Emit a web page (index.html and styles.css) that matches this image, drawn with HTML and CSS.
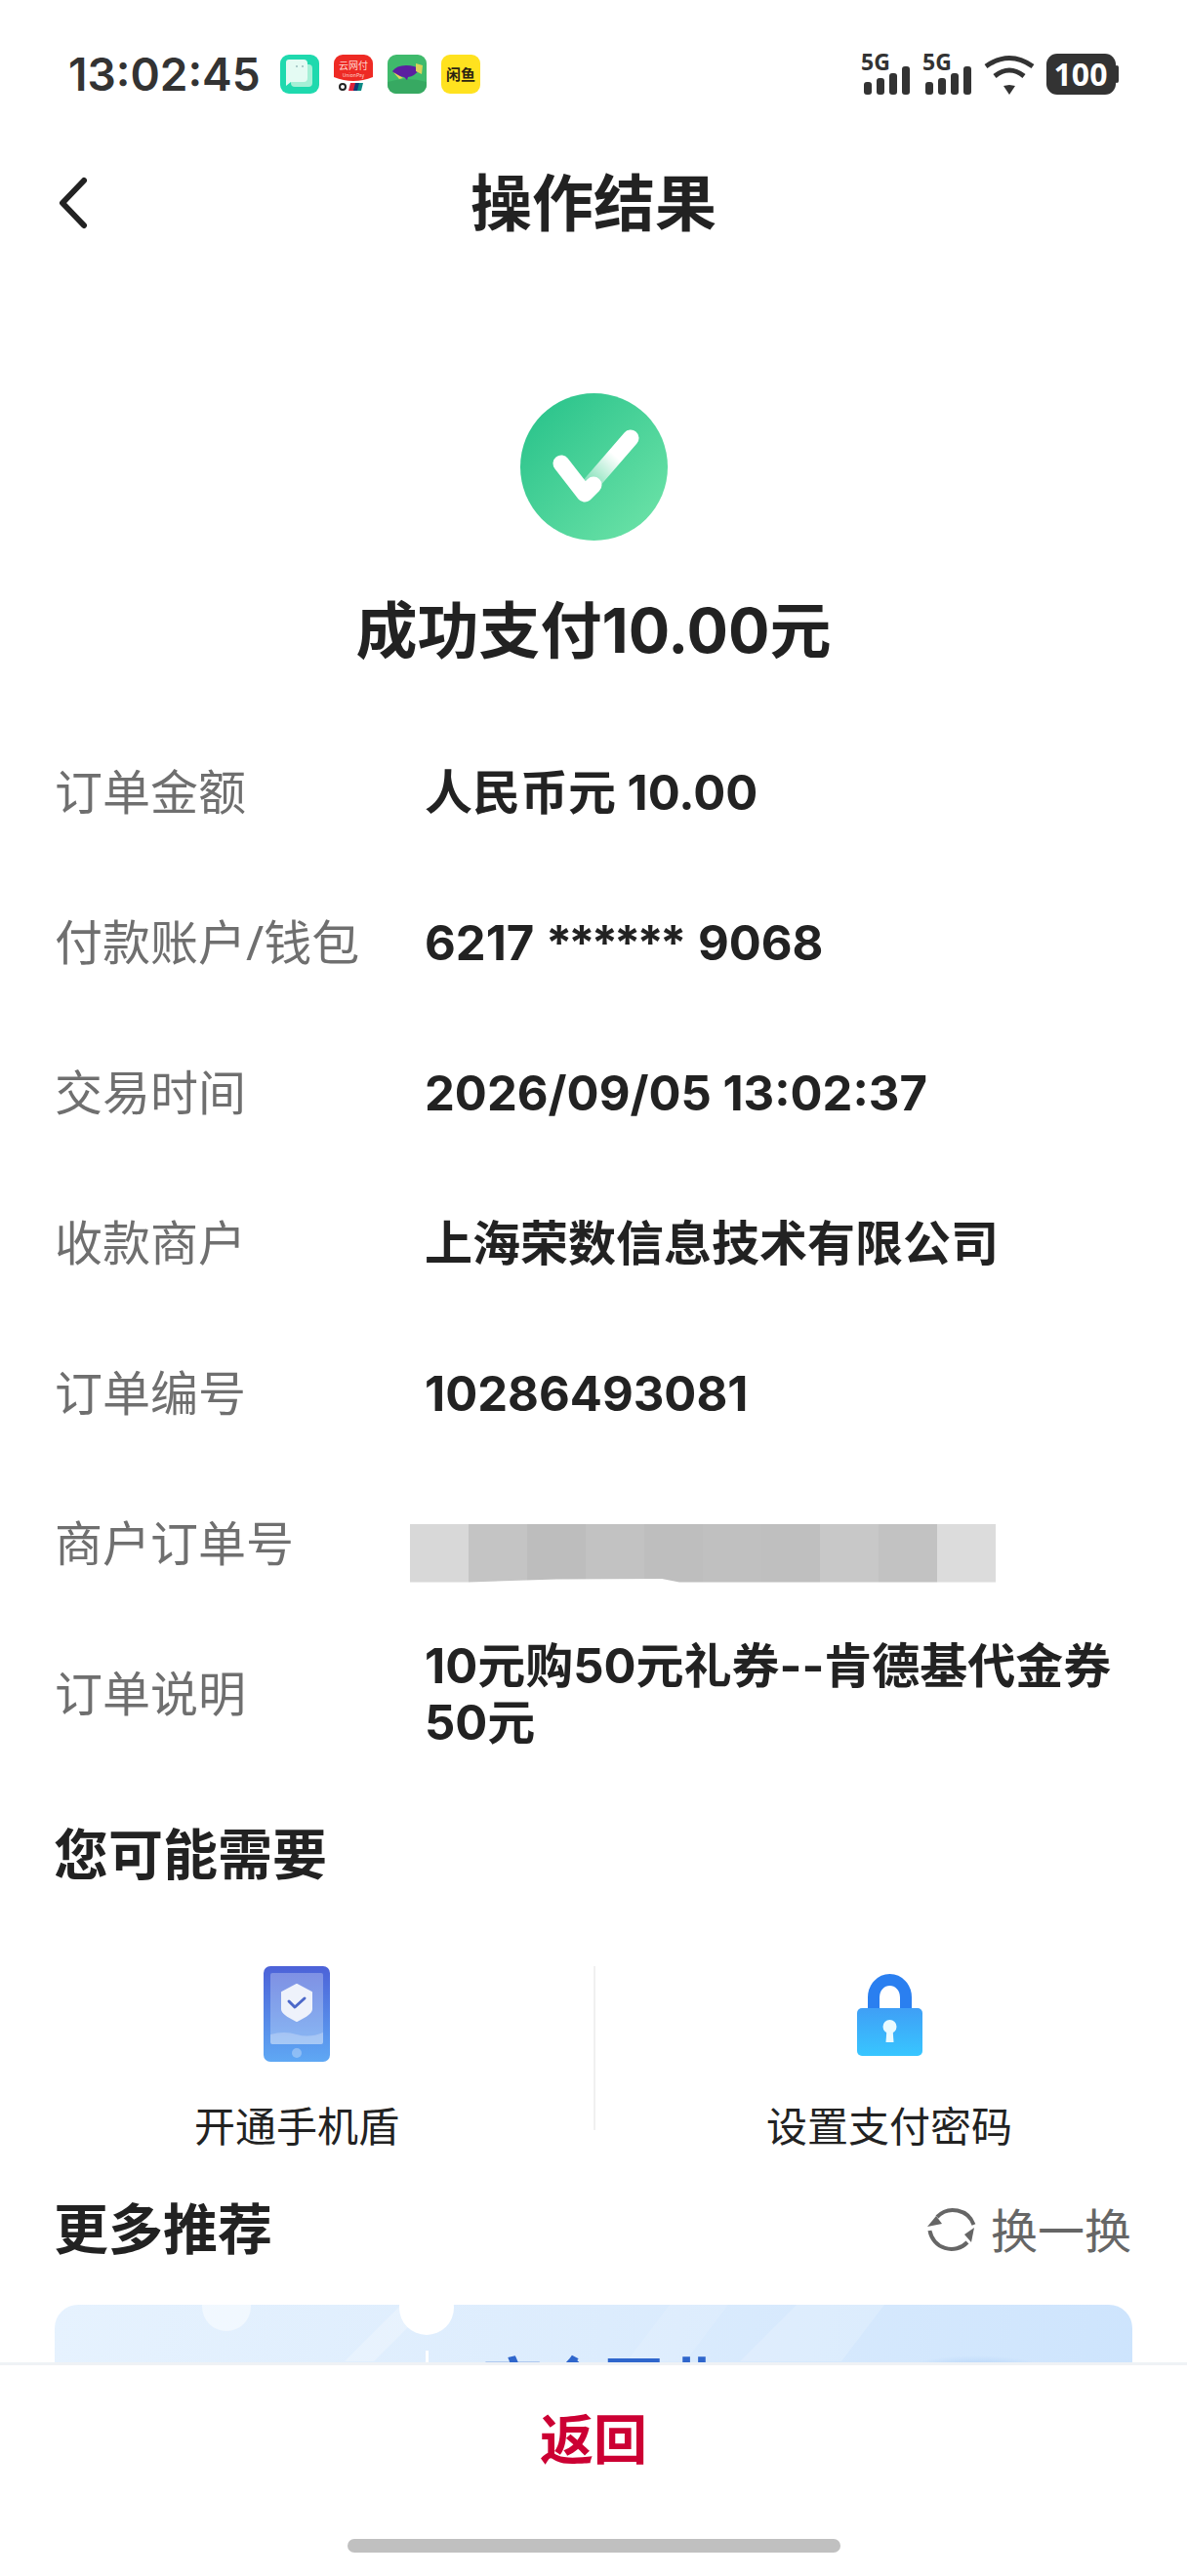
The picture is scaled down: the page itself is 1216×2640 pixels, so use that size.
FILE: index.html
```html
<!DOCTYPE html>
<html>
  <head>
    <meta name="viewport" content="width=device-width,initial-scale=1.0" />
    <title>操作结果</title>
    <link rel="stylesheet" href="styles.css">
  </head>
  <body>
    <div id="page">
      <div id="main">
        <div class="status">
          <div class="status-left">
            <span class="time">13:02:45</span>
            <svg class="app" viewBox="0 0 40 40">
              <rect width="40" height="40" rx="9" fill="#1fd9ae"/>
              <rect x="11" y="10" width="22" height="23" rx="4" fill="#a5f0d6"/>
              <path d="M9 5h15a4 4 0 0 1 4 4v15a4 4 0 0 1-4 4H11l-5 4V8a3 3 0 0 1 3-3z" fill="#e4fbf3"/>
              <circle cx="17" cy="12" r="1" fill="#9bb"/>
              <circle cx="23" cy="12" r="1" fill="#9bb"/>
            </svg>
            <svg class="app" viewBox="0 0 40 40">
              <rect width="40" height="40" rx="9" fill="#fff"/>
              <path d="M0 9a9 9 0 0 1 9-9h22a9 9 0 0 1 9 9v14q-20 8-40 0z" fill="#ee2a24"/>
              <text x="20" y="15" class="app-text" font-size="10" fill="#ffd9cf">云网付</text>
              <text x="20" y="23" class="app-text" font-size="5" fill="#ffd9cf">UnionPay</text>
              <circle cx="9" cy="33" r="3" fill="none" stroke="#222" stroke-width="2"/>
              <path d="M17 29h6l-2 8h-6z" fill="#e0213a"/>
              <path d="M22 29h5l-2 8h-5z" fill="#123a78"/>
              <path d="M26 29h4l-2 8h-4z" fill="#0d8a85"/>
            </svg>
            <svg class="app" viewBox="0 0 40 40">
              <rect width="40" height="40" rx="9" fill="#3fba6c"/>
              <path d="M0 28q20-6 40 0v3a9 9 0 0 1-9 9H9a9 9 0 0 1-9-9z" fill="#37a962"/>
              <path d="M5 17q4-6 14-6 9 0 14 4-5 7-12 8l-1 3-3-3q-8-1-12-6z" fill="#5b1fa0"/>
              <path d="M29 9l7 2-1 9-6-3z" fill="#d9d25a"/>
              <path d="M6 18l10 6-4 1z" fill="#e6d35a"/>
            </svg>
            <svg class="app" viewBox="0 0 40 40">
              <rect width="40" height="40" rx="9" fill="#ffe21f"/>
              <text x="20" y="26" class="app-text bold" font-size="15" fill="#2b2412">闲鱼</text>
            </svg>
          </div>
          <div class="status-right">
            <svg class="signal" viewBox="0 0 51 42">
              <text x="0" y="17" class="net">5G</text>
              <rect x="3" y="29" width="8" height="13" rx="3"/>
              <rect x="16" y="25" width="8" height="17" rx="3"/>
              <rect x="29" y="20" width="8" height="22" rx="3"/>
              <rect x="42" y="13" width="8" height="29" rx="3"/>
            </svg>
            <svg class="signal" viewBox="0 0 51 42">
              <text x="0" y="17" class="net">5G</text>
              <rect x="3" y="29" width="8" height="13" rx="3"/>
              <rect x="16" y="25" width="8" height="17" rx="3"/>
              <rect x="29" y="20" width="8" height="22" rx="3"/>
              <rect x="42" y="13" width="8" height="29" rx="3"/>
            </svg>
            <svg class="wifi" viewBox="0 0 52 42">
              <path d="M2 13Q26-4 50 13" fill="none" stroke="#333" stroke-width="5"/>
              <path d="M11 23Q26 11 41 23" fill="none" stroke="#333" stroke-width="5"/>
              <path d="M20 33l6-1 6 1-6 9z" fill="#333"/>
            </svg>
            <svg class="battery" viewBox="0 0 74 42">
              <rect width="71" height="42" rx="11" fill="#333"/>
              <rect x="70" y="12" width="4" height="18" rx="2" fill="#333"/>
              <text x="35" y="33" class="batt-text">100</text>
            </svg>
          </div>
        </div>

        <div class="nav">
          <svg class="back" viewBox="0 0 30 54">
            <path d="M26 4L4 27l22 23" fill="none" stroke="#222" stroke-width="6" stroke-linecap="round" stroke-linejoin="round"/>
          </svg>
          <div class="nav-title">操作结果</div>
        </div>

        <div class="result">
          <svg class="result-icon" viewBox="0 0 151 151">
            <defs>
              <linearGradient id="okBg" x1="0" y1="0" x2="1" y2="1">
                <stop offset="0.1" stop-color="#2cc48c"/>
                <stop offset="0.9" stop-color="#69e1a6"/>
              </linearGradient>
              <linearGradient id="okArm" gradientUnits="userSpaceOnUse" x1="113" y1="46" x2="68" y2="98">
                <stop offset="0.35" stop-color="#fff"/>
                <stop offset="1" stop-color="#fff" stop-opacity="0.2"/>
              </linearGradient>
            </defs>
            <circle cx="75.5" cy="75.5" r="75.5" fill="url(#okBg)"/>
            <path d="M113 46L68 98" fill="none" stroke="url(#okArm)" stroke-width="17" stroke-linecap="round"/>
            <path d="M42 72L66 103 75 94" fill="none" stroke="#fff" stroke-width="17" stroke-linecap="round" stroke-linejoin="round"/>
          </svg>
          <div class="result-text">成功支付10.00元</div>
        </div>

        <div class="rows">
          <div class="row"><div class="label">订单金额</div><div class="value">人民币元 10.00</div></div>
          <div class="row"><div class="label">付款账户/钱包</div><div class="value">6217 <span class="mask">******</span> 9068</div></div>
          <div class="row"><div class="label">交易时间</div><div class="value">2026/09/05 13:02:37</div></div>
          <div class="row"><div class="label">收款商户</div><div class="value">上海荣数信息技术有限公司</div></div>
          <div class="row"><div class="label">订单编号</div><div class="value">10286493081</div></div>
          <div class="row">
            <div class="label">商户订单号</div>
            <div class="blur"><i></i><i></i><i></i><i></i><i></i><i></i><i></i><i></i><i></i><i></i></div>
          </div>
          <div class="row"><div class="label">订单说明</div><div class="value desc">10元购50元礼券--肯德基代金券50元</div></div>
        </div>

        <div class="section-title first">您可能需要</div>
        <div class="actions">
          <div class="action">
            <svg class="phone" viewBox="0 0 68 98">
              <defs>
                <linearGradient id="phoneBg" x1="0" y1="0" x2="0" y2="1">
                  <stop offset="0" stop-color="#4c62d8"/>
                  <stop offset="1" stop-color="#5fa8f4"/>
                </linearGradient>
              </defs>
              <rect width="68" height="98" rx="7" fill="url(#phoneBg)"/>
              <rect x="7" y="7" width="54" height="73" rx="2" fill="#fff" fill-opacity="0.28"/>
              <path d="M7 70q14-4 27 0t27-2v10a2 2 0 0 1-2 2H9a2 2 0 0 1-2-2z" fill="#fff" fill-opacity="0.25"/>
              <path d="M34 19l15 8v17q0 5-15 12-15-7-15-12V27z" fill="#eef2fb" stroke="#eef2fb" stroke-width="2" stroke-linejoin="round"/>
              <path d="M26 36l6 6 10-9" fill="none" stroke="#4c68c9" stroke-width="3" stroke-linecap="round" stroke-linejoin="round"/>
              <circle cx="34" cy="89" r="5" fill="#fff" fill-opacity="0.3"/>
            </svg>
            <div class="action-label">开通手机盾</div>
          </div>
          <div class="action split">
            <svg class="lock" viewBox="0 0 67 84">
              <defs>
                <linearGradient id="lockBg" x1="0" y1="0" x2="0" y2="1">
                  <stop offset="0" stop-color="#3f9ff6"/>
                  <stop offset="1" stop-color="#38c6ff"/>
                </linearGradient>
              </defs>
              <path d="M17 38V24A16.5 18 0 0 1 50 24V38" fill="none" stroke="#2a7ff0" stroke-width="12"/>
              <rect y="35" width="67" height="49" rx="5" fill="url(#lockBg)"/>
              <circle cx="33.5" cy="54" r="7" fill="#eafaff"/>
              <path d="M30.500 56h6l1 14h-8z" fill="#eafaff"/>
            </svg>
            <div class="action-label">设置支付密码</div>
          </div>
        </div>

        <div class="more-head">
          <div class="section-title">更多推荐</div>
          <div class="swap">
            <svg class="swap-icon" viewBox="0 0 50 50">
              <path d="M10 14A22.500 22.500 0 0 1 47.500 22" fill="none" stroke="#666" stroke-width="4"/>
              <path d="M2.500 28A22.500 22.500 0 0 0 41 40" fill="none" stroke="#666" stroke-width="4"/>
              <path d="M0 24L9 13l6 8z" fill="#666"/>
              <path d="M48 25L38 32l7 8z" fill="#666"/>
            </svg>
            <span>换一换</span>
          </div>
        </div>

        <div class="card">
          <svg class="card-art" viewBox="0 0 1104 160" preserveAspectRatio="none">
            <defs>
              <radialGradient id="glow">
                <stop offset="0" stop-color="#a9ccf6" stop-opacity="0.8"/>
                <stop offset="1" stop-color="#a9ccf6" stop-opacity="0"/>
              </radialGradient>
            </defs>
            <path d="M297 58L355 0h30l-58 58z" fill="#fff" fill-opacity="0.25"/>
            <path d="M586 58L630 0h60l-44 58z" fill="#fff" fill-opacity="0.12"/>
            <path d="M702 58L760 0h90l-44 58z" fill="#fff" fill-opacity="0.18"/>
            <ellipse cx="944" cy="66" rx="70" ry="14" fill="url(#glow)"/>
            <circle cx="176" cy="2" r="25" fill="#fff" fill-opacity="0.5"/>
            <circle cx="381" cy="3" r="28" fill="#fff"/>
            <rect x="380" y="47" width="3" height="20" fill="#fff"/>
          </svg>
          <div class="card-title">商企互业</div>
        </div>
      </div>

      <div class="footer">
        <div class="footer-btn">返回</div>
        <div class="home-bar"></div>
      </div>
    </div>
  </body>
</html>
```

FILE: styles.css
```css
* {
  box-sizing: border-box;
}
body {
  margin: 0;
  background: #fff;
  font-family: "Noto Sans", "Noto Sans CJK SC", sans-serif;
  color: #222;
}

#page {
  width: 1216px;
  height: 2640px;
  display: flex;
  flex-direction: column;
  overflow: hidden;
}
#main {
  flex: 1;
  min-height: 0;
  overflow: hidden;
}

.status {
  height: 152px;
  padding: 0 70px;
  display: flex;
  justify-content: space-between;
  align-items: center;
}
.status-left {
  display: flex;
  align-items: center;
}
.time {
  width: 217px;
  font-family: Inter, "Noto Sans", sans-serif;
  font-size: 46px;
  font-weight: 600;
  color: #333;
}
.app {
  width: 40px;
  height: 40px;
  margin-right: 15px;
}
.app-text {
  font-family: "Noto Sans CJK SC", sans-serif;
  text-anchor: middle;
}
.app-text.bold {
  font-weight: 700;
}
.status-right {
  display: flex;
  align-items: center;
  gap: 12px;
}
.signal {
  width: 51px;
  height: 42px;
  fill: #333;
  overflow: visible;
}
.net {
  font-size: 23px;
  font-weight: 700;
}
.wifi {
  width: 52px;
  height: 42px;
}
.battery {
  width: 74px;
  height: 42px;
  overflow: visible;
}
.batt-text {
  fill: #fff;
  font-size: 32px;
  font-weight: 700;
  text-anchor: middle;
}

.nav {
  height: 112px;
  padding-left: 60px;
  display: flex;
  align-items: center;
  position: relative;
}
.back {
  width: 30px;
  height: 54px;
}
.nav-title {
  position: absolute;
  left: 0;
  right: 0;
  margin-top: -3px;
  text-align: center;
  font-size: 63px;
  font-weight: 700;
  line-height: 112px;
}

.result {
  padding-top: 139px;
  display: flex;
  flex-direction: column;
  align-items: center;
}
.result-icon {
  width: 151px;
  height: 151px;
}
.result-text {
  margin-top: 55px;
  font-family: Inter, "Noto Sans CJK SC", sans-serif;
  font-size: 63px;
  font-weight: 700;
  line-height: 74px;
}

.rows {
  margin-top: 51px;
  padding: 0 56px;
}
.row {
  height: 154px;
  display: flex;
  align-items: center;
}
.label {
  width: 379px;
  flex-shrink: 0;
  font-size: 49px;
  line-height: 60px;
  color: #6f6f6f;
}
.value {
  padding-top: 3px;
  font-family: Inter, "Noto Sans CJK SC", sans-serif;
  font-size: 49px;
  line-height: 60px;
  font-weight: 700;
}
.mask {
  letter-spacing: -4px;
  margin-right: 4px;
}
.desc {
  line-height: 58px;
}
.blur {
  width: 600px;
  height: 60px;
  margin: 21px 0 0 -15px;
  display: flex;
  clip-path: polygon(0 0, 100% 0, 100% 100%, 46% 100%, 43% 94%, 25% 95%, 10% 100%, 0 100%);
}
.blur i {
  flex: 1;
  background: #c0c0c0;
}
.blur i:nth-child(1) { background: #d8d8d8; }
.blur i:nth-child(2) { background: #c4c4c4; }
.blur i:nth-child(3) { background: #bdbdbd; }
.blur i:nth-child(4) { background: #c2c2c2; }
.blur i:nth-child(5) { background: #bebebe; }
.blur i:nth-child(6) { background: #c0c0c0; }
.blur i:nth-child(7) { background: #bfbfbf; }
.blur i:nth-child(8) { background: #c8c8c8; }
.blur i:nth-child(9) { background: #c2c2c2; }
.blur i:nth-child(10) { background: #dcdcdc; }

.section-title {
  font-size: 56px;
  font-weight: 700;
  line-height: 76px;
}
.section-title.first {
  margin-top: 49px;
  padding-left: 55px;
}

.actions {
  margin-top: 78px;
  display: grid;
  grid-template-columns: 1fr 1fr;
}
.action {
  height: 168px;
  display: flex;
  flex-direction: column;
  align-items: center;
}
.action.split {
  border-left: 2px solid #f0f0f0;
  padding-right: 4px;
}
.phone {
  width: 68px;
  height: 98px;
  flex-shrink: 0;
}
.lock {
  width: 67px;
  height: 84px;
  margin: 8px 0 6px;
  flex-shrink: 0;
}
.action-label {
  margin-top: 38px;
  font-size: 42px;
  line-height: 56px;
  color: #222;
}

.more-head {
  margin-top: 62px;
  padding: 0 57px 0 55px;
  display: flex;
  justify-content: space-between;
  align-items: center;
}
.swap {
  display: flex;
  align-items: center;
  gap: 15px;
  font-size: 48px;
  color: #666;
}
.swap-icon {
  width: 50px;
  height: 50px;
}

.card {
  margin: 41px 56px 0;
  height: 200px;
  border-radius: 24px;
  position: relative;
  overflow: hidden;
  background: linear-gradient(100deg, #e6f2fe 0%, #dcecfd 50%, #cde4fd 100%);
}
.card-art {
  position: absolute;
  left: 0;
  top: 0;
  width: 1104px;
  height: 160px;
}
.card-title {
  position: relative;
  padding: 37px 0 0 438px;
  font-size: 62px;
  line-height: 90px;
  font-weight: 700;
  color: #2f66cc;
}

.footer {
  height: 219px;
  flex-shrink: 0;
  background: #fff;
  border-top: 3px solid #eff2f5;
  display: flex;
  flex-direction: column;
  align-items: center;
}
.footer-btn {
  margin-top: 38px;
  font-size: 55px;
  font-weight: 700;
  line-height: 74px;
  color: #cc0033;
}
.home-bar {
  width: 505px;
  height: 14px;
  margin-top: 66px;
  border-radius: 7px;
  background: #c0c0c0;
}
```
